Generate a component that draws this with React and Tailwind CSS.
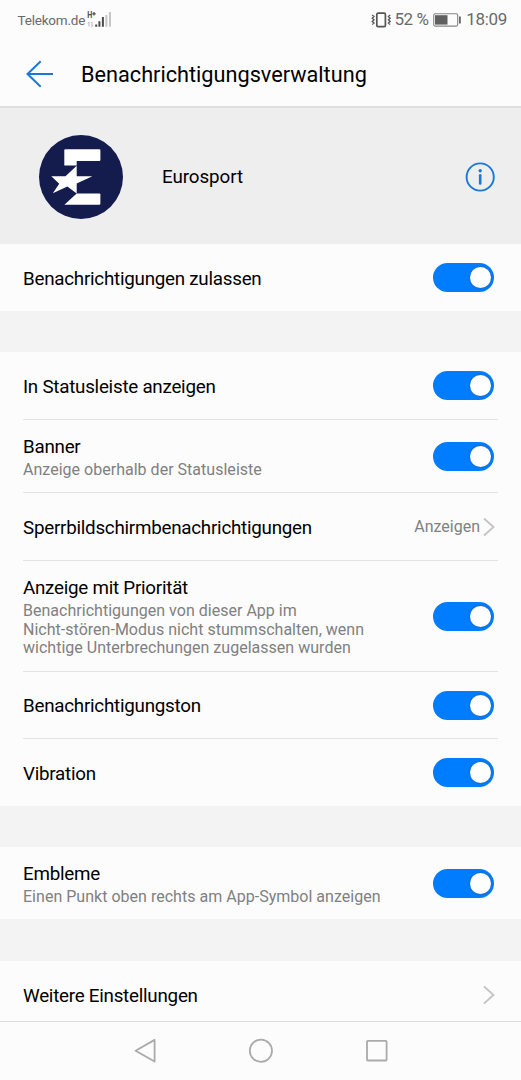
import { useState } from 'react';

function Toggle({ checked, onChange, label }) {
  return (
    <button
      role="switch"
      aria-checked={checked}
      aria-label={label}
      onClick={() => onChange(!checked)}
      className={`mr-[4.4px] flex h-[29px] w-[61px] shrink-0 items-center rounded-full px-[3px] ${
        checked ? 'justify-end bg-[#007dff]' : 'justify-start bg-gray-300'
      }`}
    >
      <span className="h-[21px] w-[21px] rounded-full bg-white shadow-[0_0_2px_1px_rgba(40,100,170,0.55)]" />
    </button>
  );
}

function Chevron() {
  return (
    <svg className="mr-[3px] h-[20px] w-[12px] shrink-0" viewBox="0 0 12 20" fill="none" stroke="#c4c4c4" strokeWidth="1.8">
      <path d="M1 1.5L10.5 10L1 18.5" />
    </svg>
  );
}

function Row({ title, subtitle, height, divider, children }) {
  return (
    <div className={`mx-[23px] flex items-center justify-between ${height} ${divider ? 'border-b border-[#e3e3e3]' : ''}`}>
      <div className="pt-[2px]">
        <p className="text-[18.8px] leading-[24px] tracking-[-0.25px] text-black">{title}</p>
        {subtitle && (
          <p className="mt-[2px] max-w-[370px] whitespace-pre-line text-[16px] leading-[18.75px] tracking-[0.02px] text-[#808080]">{subtitle}</p>
        )}
      </div>
      {children}
    </div>
  );
}

function StatusBar() {
  return (
    <div className="flex h-[40px] items-center justify-between pl-[17.5px] pr-[14px] text-[#6a6a6a]">
      <div className="flex items-center">
        <span className="w-[66.5px] text-[13.5px] tracking-[-0.2px]">Telekom.de</span>
        <svg className="ml-[3px] h-[18px] w-[25px]" viewBox="0 0 25 18">
          <text x="0.2" y="7.2" fontSize="8.4" fontWeight="700" fill="#4c4c4c" textLength="5" lengthAdjust="spacingAndGlyphs">H</text>
          <path d="M5.3 2.8h3.4M7 1.1v3.4" stroke="#4c4c4c" strokeWidth="1.2" />
          <path d="M2 11v4.5M0.8 12.3L2 11M5 11v4.5M6.2 14.2L5 15.5" stroke="#b8b8b8" strokeWidth="1" fill="none" />
          <path d="M9.2 13.6v2.2M12.4 10.2v5.6M15.9 6v9.8" stroke="#4c4c4c" strokeWidth="2" />
          <path d="M19.4 4v11.8M23 1v14.8" stroke="#c6c6c6" strokeWidth="2" />
        </svg>
      </div>
      <div className="flex items-center">
        <svg className="h-[16px] w-[21px]" viewBox="0 0 21 16" fill="none" stroke="#555">
          <rect x="5.8" y="1.2" width="8.6" height="13.4" rx="1.2" strokeWidth="1.7" />
          <path d="M1.2 3l1.8 1.6l-1.8 1.6l1.8 1.6l-1.8 1.6l1.8 1.6l-1.8 1.4" strokeWidth="1.3" />
          <path d="M19.2 3l-1.8 1.6l1.8 1.6l-1.8 1.6l1.8 1.6l-1.8 1.6l1.8 1.4" strokeWidth="1.3" />
        </svg>
        <span className="ml-[2px] text-[17px] tracking-[-0.4px]">52 %</span>
        <svg className="ml-[4.5px] h-[14px] w-[28px]" viewBox="0 0 28 14">
          <rect x="0.7" y="0.7" width="24" height="12.4" rx="1.5" fill="none" stroke="#858585" strokeWidth="1.1" />
          <rect x="2" y="2.2" width="12.5" height="9.4" fill="#606060" />
          <path d="M26.9 3.5v7" stroke="#606060" strokeWidth="1.7" />
        </svg>
        <span className="ml-[5px] text-[17px] tracking-[-0.3px]">18:09</span>
      </div>
    </div>
  );
}

function EurosportLogo() {
  return (
    <svg className="h-[84px] w-[84px]" viewBox="0 0 84 84">
      <circle cx="42" cy="42" r="42" fill="#141b4d" />
      <g fill="#fff">
        <path d="M26.3 14.3H60.4a1 1 0 0 1 1 1V25a1 1 0 0 1-1 1H37.7v4.6H25.3V15.3a1 1 0 0 1 1-1z" />
        <path d="M37.7 30.8V41.3H53.4L37.7 48.4V58.4L28.4 51.6L13.8 58.2L20.2 48.7L12.3 41.3H26.5z" />
        <path d="M37.7 58.4H60.4a1 1 0 0 1 1 1v9.3a1 1 0 0 1-1 1H25.4z" />
      </g>
    </svg>
  );
}

export default function App() {
  const [settings, setSettings] = useState({
    allow: true,
    statusBar: true,
    banner: true,
    priority: true,
    sound: true,
    vibration: true,
    badges: true,
  });

  const toggle = (key, label) => (
    <Toggle checked={settings[key]} label={label} onChange={(v) => setSettings((s) => ({ ...s, [key]: v }))} />
  );

  return (
    <div className="flex h-[1080px] w-[521px] flex-col overflow-hidden bg-[#fcfcfc] font-['Roboto',sans-serif]">
      <StatusBar />

      {/* Header */}
      <header className="flex h-[68px] items-center border-b-2 border-[#dfdfdf] pl-[26px] pt-[1px]">
        <svg className="h-[28px] w-[28px]" viewBox="0 0 28 28" fill="none" stroke="#1a79d6" strokeWidth="2">
          <path d="M14.7 1.3L1.5 14L14.7 26.7M1.5 14H27" />
        </svg>
        <h1 className="ml-[27px] pt-[3px] text-[21.7px] text-black">Benachrichtigungsverwaltung</h1>
      </header>

      {/* App info */}
      <div className="flex h-[136px] shrink-0 items-center bg-[#eeeeee] pl-[39px] pr-[26px] pt-[1px]">
        <EurosportLogo />
        <span className="ml-[39px] pt-[2px] text-[18.8px] tracking-[-0.08px] text-black">Eurosport</span>
        <svg className="ml-auto h-[30px] w-[30px]" viewBox="0 0 30 30" fill="none" stroke="#1a79d6">
          <circle cx="15.2" cy="15" r="13.6" strokeWidth="1.9" />
          <path d="M15.2 13.2v8.3" strokeWidth="2.6" strokeLinecap="round" />
          <circle cx="15.2" cy="8.7" r="1.7" fill="#1a79d6" stroke="none" />
        </svg>
      </div>

      <Row title="Benachrichtigungen zulassen" height="h-[67px]">
        {toggle('allow', 'Benachrichtigungen zulassen')}
      </Row>

      <div className="h-[41px] bg-[#f3f3f3]" />

      <Row title="In Statusleiste anzeigen" height="h-[68px]" divider>
        {toggle('statusBar', 'In Statusleiste anzeigen')}
      </Row>
      <Row title="Banner" subtitle="Anzeige oberhalb der Statusleiste" height="h-[73px]" divider>
        {toggle('banner', 'Banner')}
      </Row>
      <Row title="Sperrbildschirmbenachrichtigungen" height="h-[68px]" divider>
        <div className="flex items-center gap-[3px]">
          <span className="pt-[1px] text-[16px] text-[#808080]">Anzeigen</span>
          <Chevron />
        </div>
      </Row>
      <Row
        title="Anzeige mit Priorität"
        subtitle={'Benachrichtigungen von dieser App im\nNicht-stören-Modus nicht stummschalten, wenn\nwichtige Unterbrechungen zugelassen wurden'}
        height="h-[111px]"
        divider
      >
        {toggle('priority', 'Anzeige mit Priorität')}
      </Row>
      <Row title="Benachrichtigungston" height="h-[67px]" divider>
        {toggle('sound', 'Benachrichtigungston')}
      </Row>
      <Row title="Vibration" height="h-[67px]">
        {toggle('vibration', 'Vibration')}
      </Row>

      <div className="h-[41px] bg-[#f3f3f3]" />

      <Row title="Embleme" subtitle="Einen Punkt oben rechts am App-Symbol anzeigen" height="h-[72px]">
        {toggle('badges', 'Embleme')}
      </Row>

      <div className="h-[42px] bg-[#f3f3f3]" />

      <Row title="Weitere Einstellungen" height="h-[67px]">
        <Chevron />
      </Row>

      {/* Navigation bar */}
      <nav className="-mt-[7px] flex h-[59px] shrink-0 items-center justify-center gap-[90px] border-t border-[#dddddd] bg-[#fcfcfc]">
        <svg className="h-[26px] w-[26px]" viewBox="0 0 26 26" fill="none" stroke="#aaa" strokeWidth="1.8" strokeLinejoin="round">
          <path d="M22.6 1.9L3.6 12.7L22.6 23.5z" />
        </svg>
        <svg className="h-[26px] w-[26px]" viewBox="0 0 26 26" fill="none" stroke="#aaa" strokeWidth="1.8">
          <circle cx="12.9" cy="12.7" r="11.1" />
        </svg>
        <svg className="h-[26px] w-[26px]" viewBox="0 0 26 26" fill="none" stroke="#aaa" strokeWidth="1.8">
          <rect x="3" y="2.9" width="19.6" height="19.6" rx="0.8" />
        </svg>
      </nav>
    </div>
  );
}
